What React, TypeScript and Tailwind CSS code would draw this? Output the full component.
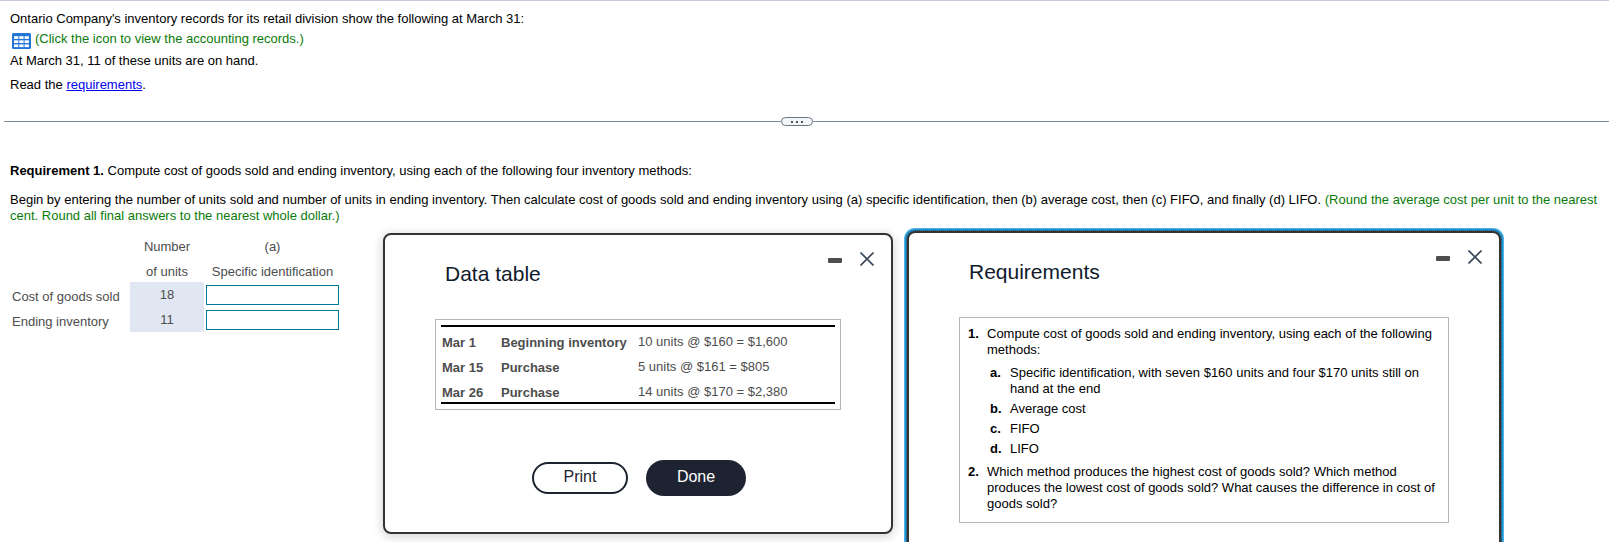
import React, { useId } from "react";

type DialogProps = {
  title: string;
  className: string;
  children: React.ReactNode;
};

function TableIcon() {
  return (
    <svg viewBox="0 0 19 16" className="h-4 w-[19px]" aria-hidden="true">
      <rect width="19" height="16" rx="1.5" fill="#2376d6" />
      <g fill="#fff">
        {[3.2, 7.3, 11.4].map((y) =>
          [2, 7.3, 12.6].map((x) => <rect key={`${x}-${y}`} x={x} y={y} width="4.3" height="2.7" />),
        )}
      </g>
    </svg>
  );
}

function Dialog({ title, className, children }: DialogProps) {
  const id = useId();
  return (
    <section role="dialog" aria-labelledby={id} className={`rounded-lg border-2 border-[#333] bg-white ${className}`}>
      <header className="flex h-[84px] items-start justify-between pr-4 pl-15">
        <h2 id={id} className="pt-[27px] text-[21px] leading-6 text-[#0f1a2b]">
          {title}
        </h2>
        <div className="flex items-center gap-4 pt-[14px]">
          <button type="button" aria-label="Minimize" className="flex h-5 w-4 items-center justify-center pt-[3px]">
            <svg viewBox="0 0 14 5" className="h-[5px] w-[14px]" aria-hidden="true">
              <rect width="14" height="5" rx="1" fill="#4d4d4d" />
            </svg>
          </button>
          <button type="button" aria-label="Close" className="flex h-5 w-4 items-center justify-center">
            <svg viewBox="0 0 14 14" className="h-[14px] w-[14px]" aria-hidden="true">
              <path d="M.5 .5 13.5 13.5M13.5 .5 .5 13.5" stroke="#3d4a5c" strokeWidth="1.7" />
            </svg>
          </button>
        </div>
      </header>
      {children}
    </section>
  );
}

const records = [
  ["Mar 1", "Beginning inventory", "10 units @ $160 = $1,600"],
  ["Mar 15", "Purchase", "5 units @ $161 = $805"],
  ["Mar 26", "Purchase", "14 units @ $170 = $2,380"],
];

const answers = [
  { id: "cogs", label: "Cost of goods sold", units: "18" },
  { id: "ending", label: "Ending inventory", units: "11" },
];

const methods = [
  ["a.", "Specific identification, with seven $160 units and four $170 units still on hand at the end"],
  ["b.", "Average cost"],
  ["c.", "FIFO"],
  ["d.", "LIFO"],
];

export default function App() {
  return (
    <main className="h-screen overflow-hidden border-t border-[#c3c9d9] bg-white font-['Liberation_Sans',Arial,sans-serif] text-[13px] leading-4 text-black">
      <div className="px-[10px] pt-[10px]">
        <p>Ontario Company's inventory records for its retail division show the following at March 31:</p>
        <p className="mt-1 flex items-start gap-1 pl-[2px] text-[#0a7a0a]">
          <button type="button" aria-label="View the accounting records" className="mt-[2px]">
            <TableIcon />
          </button>
          (Click the icon to view the accounting records.)
        </p>
        <p className="mt-1">At March 31, 11 of these units are on hand.</p>
        <p className="mt-2">
          Read the{" "}
          <a href="#requirements" className="text-[#0000ee] underline">
            requirements
          </a>
          .
        </p>
      </div>

      <div className="mt-6 ml-1 flex h-[9px] items-center">
        <span className="h-px flex-1 bg-[#7e8a9a]" />
        <button
          type="button"
          aria-label="Resize panes"
          className="flex h-[9px] w-8 items-center justify-center gap-[3px] rounded-full border border-[#6a7686] bg-[#f3f5f9]"
        >
          <span className="size-[2px] bg-[#555]" />
          <span className="size-[2px] bg-[#555]" />
          <span className="size-[2px] bg-[#555]" />
        </button>
        <span className="h-px flex-1 bg-[#7e8a9a]" />
        <span className="h-px w-5 bg-[#7e8a9a]" />
      </div>

      <div className="px-[10px] pt-[37px]">
        <p>
          <strong>Requirement 1.</strong> Compute cost of goods sold and ending inventory, using each of the following
          four inventory methods:
        </p>
        <p className="mt-[13px]">
          Begin by entering the number of units sold and number of units in ending inventory. Then calculate cost of
          goods sold and ending inventory using (a) specific identification, then (b) average cost, then (c) FIFO, and
          finally (d) LIFO.{" "}
          <span className="text-[#0a7a0a]">
            (Round the average cost per unit to the nearest cent. Round all final answers to the nearest whole dollar.)
          </span>
        </p>
      </div>

      <div className="flex items-start pt-1 pl-[10px]">
        <div className="min-w-[373px] pt-1">
          <table className="text-[#4d4d4d]">
            <thead>
              <tr className="h-[25px]">
                <td className="w-[120px]" />
                <th className="w-[74px] p-0 pt-1 font-normal">Number</th>
                <th className="w-[137px] p-0 pt-1 font-normal">(a)</th>
              </tr>
              <tr className="h-[25px]">
                <td />
                <th className="p-0 pt-1 font-normal">of units</th>
                <th className="p-0 pt-1 font-normal">Specific identification</th>
              </tr>
            </thead>
            <tbody>
              {answers.map(({ id, label, units }) => (
                <tr key={id} className="h-[25px]">
                  <th className="p-0 pt-1 pl-[2px] text-left font-normal">
                    <label htmlFor={id}>{label}</label>
                  </th>
                  <td className="bg-[#e1e7f2] p-0 text-center">{units}</td>
                  <td className="p-0 pl-[2px]">
                    <input id={id} type="text" className="block h-5 w-[133px] border border-[#007a99] bg-white px-1" />
                  </td>
                </tr>
              ))}
            </tbody>
          </table>
        </div>

        <Dialog title="Data table" className="mt-[5px] w-[510px] shadow-[0_2px_10px_2px_rgba(0,0,0,0.14)]">
          <div className="mx-[50px] border border-[#b5b5b5] p-[5px]">
            <table className="w-full border-separate border-spacing-0 border-y-2 border-black text-[#4d4d4d]">
              <tbody>
                {records.map(([date, kind, detail]) => (
                  <tr key={date} className="h-[25px]">
                    <th className="w-[60px] p-0 pt-[6px] pl-[1px] text-left">{date}</th>
                    <th className="w-[137px] p-0 pt-[6px] text-left">{kind}</th>
                    <td className="p-0 pt-1">{detail}</td>
                  </tr>
                ))}
              </tbody>
            </table>
          </div>
          <div className="flex items-center justify-center gap-[18px] pt-[50px] pb-9 pl-[2px] text-base leading-5">
            <button type="button" className="h-8 w-24 rounded-full border-2 border-[#1d2330] bg-white pb-[2px] text-[#1d2330]">
              Print
            </button>
            <button type="button" className="h-9 w-[100px] rounded-full bg-[#1d2330] pb-[2px] text-white">
              Done
            </button>
          </div>
        </Dialog>

        <Dialog
          title="Requirements"
          className="mt-[3px] ml-[14px] w-[594px] pb-10 shadow-[0_0_0_2px_#1b95d8,0_0_0_3px_#4fb0e2] outline-1 outline-[#444] outline-dotted"
        >
          <ol id="requirements" className="mx-[50px] border border-[#b5b5b5] pt-2 pr-2 pb-[10px] pl-2">
            <li className="flex">
              <b className="w-[19px] shrink-0">1.</b>
              <div>
                Compute cost of goods sold and ending inventory, using each of the following methods:
                <ol className="mt-[7px] mb-[7px] space-y-1 pl-[3px]">
                  {methods.map(([mark, text]) => (
                    <li key={mark} className="flex">
                      <b className="w-5 shrink-0">{mark}</b>
                      <span>{text}</span>
                    </li>
                  ))}
                </ol>
              </div>
            </li>
            <li className="flex">
              <b className="w-[19px] shrink-0">2.</b>
              <span>
                Which method produces the highest cost of goods sold? Which method produces the lowest cost of goods
                sold? What causes the difference in cost of goods sold?
              </span>
            </li>
          </ol>
        </Dialog>
      </div>
    </main>
  );
}
